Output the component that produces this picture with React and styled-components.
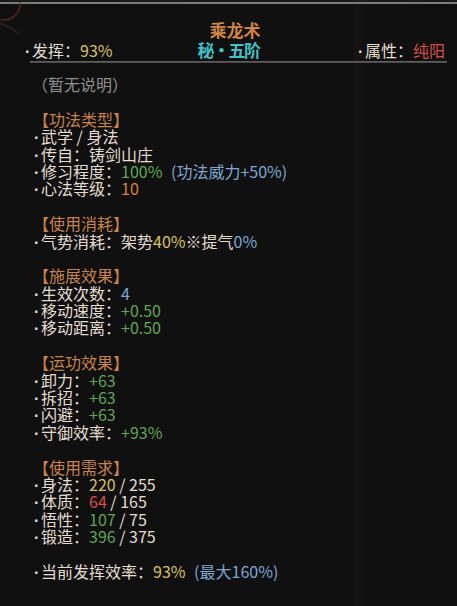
import React from "react";
import styled, { createGlobalStyle } from "styled-components";

const GlobalStyle = createGlobalStyle`
  html, body {
    margin: 0;
    padding: 0;
    background: #0e0e0e;
  }
`;

const LINE = 17.4;

const colors = {
  text: "#e4ddcf",
  gray: "#8e8e8e",
  head: "#c7834c",
  yellow: "#d7c069",
  green: "#5ea653",
  blue: "#7fa6d2",
  orange: "#de7f3c",
  red: "#d6504b",
};

const Page = styled.div`
  position: relative;
  width: 457px;
  height: 606px;
  overflow: hidden;
  background: linear-gradient(90deg, #0f0f0f 0%, #101010 77%, #141414 78%, #101010 80%, #0f0f0f 100%);
  font-family: "Noto Sans CJK SC", "Noto Sans", sans-serif;
  font-size: 16px;
  color: ${colors.text};
  border-top: 2px solid #1a1a1a;
  box-sizing: border-box;
`;

const TopRule = styled.div`
  height: 2px;
  background: #7b7b7b;
`;

const Deco = styled.svg`
  position: absolute;
  left: -14px;
  top: -12px;
  pointer-events: none;
`;

const Header = styled.div`
  padding: 16px 12px 0 25px;
`;

const Title = styled.div`
  text-align: center;
  font-size: 17px;
  font-weight: 700;
  line-height: 20px;
  color: #d08545;
`;

const SubRow = styled.div`
  display: flex;
  justify-content: space-between;
  align-items: center;
  height: 20px;
  line-height: 20px;
  position: relative;
`;

const Grade = styled.div`
  position: absolute;
  left: 0;
  right: 0;
  text-align: center;
  font-size: 17px;
  font-weight: 700;
  color: #47bfc3;
  margin-left: -25px;
  margin-right: -12px;
  letter-spacing: -1.5px;
`;

const Stat = styled.div`
  position: relative;
  z-index: 1;
  white-space: nowrap;
  height: 20px;
`;

const Separator = styled.div`
  height: 1px;
  margin: 1px 10px 0 30px;
  background: #4a4a4a;
  border-top: 1px solid #5e5e5e;
`;

const Body = styled.div`
  display: flex;
  flex-direction: column;
  gap: ${LINE}px;
  padding: 13px 0 0 34px;
  line-height: ${LINE}px;
`;

const Desc = styled.div`
  color: ${colors.gray};
  margin-left: -2px;
  height: ${LINE}px;
`;

const Section = styled.div`
  display: flex;
  flex-direction: column;
`;

const SectionTitle = styled.div`
  color: ${colors.head};
  margin-left: -1px;
  height: ${LINE}px;
`;

const Row = styled.div`
  white-space: nowrap;
  height: ${LINE}px;
`;

const Dot = styled.span`
  display: inline-block;
  width: 7px;
  font-family: "Liberation Sans", Arial, sans-serif;
  font-weight: 700;
  line-height: 0;
`;

const V = styled.span`
  color: ${(p) => colors[p.$c] || colors.text};
  margin-left: ${(p) => (p.$gap ? "5px" : "0")};
`;

const Item = ({ children }) => (
  <Row>
    <Dot>·</Dot>
    {children}
  </Row>
);

export default function App() {
  return (
    <>
      <GlobalStyle />
      <Page>
        <Deco width="60" height="60" viewBox="0 0 60 60">
          <circle cx="18" cy="14" r="16" fill="none" stroke="#6a2a30" strokeWidth="2" opacity="0.6" />
          <path d="M4 30 Q20 34 34 44" fill="none" stroke="#3a2a2a" strokeWidth="2" opacity="0.6" />
        </Deco>
        <TopRule />
        <Header>
          <Title>乘龙术</Title>
          <SubRow>
            <Grade>秘·五阶</Grade>
            <Stat>
              <Dot>·</Dot>发挥：<V $c="yellow">93%</V>
            </Stat>
            <Stat>
              <Dot>·</Dot>属性：<V $c="red">纯阳</V>
            </Stat>
          </SubRow>
        </Header>
        <Separator />
        <Body>
          <Desc>（暂无说明）</Desc>

          <Section>
            <SectionTitle>【功法类型】</SectionTitle>
            <Item>武学 / 身法</Item>
            <Item>传自：铸剑山庄</Item>
            <Item>
              修习程度：<V $c="green">100%</V> <V $c="blue" $gap>(功法威力+50%)</V>
            </Item>
            <Item>
              心法等级：<V $c="orange">10</V>
            </Item>
          </Section>

          <Section>
            <SectionTitle>【使用消耗】</SectionTitle>
            <Item>
              气势消耗：架势<V $c="yellow">40%</V>※提气<V $c="blue">0%</V>
            </Item>
          </Section>

          <Section>
            <SectionTitle>【施展效果】</SectionTitle>
            <Item>
              生效次数：<V $c="blue">4</V>
            </Item>
            <Item>
              移动速度：<V $c="green">+0.50</V>
            </Item>
            <Item>
              移动距离：<V $c="green">+0.50</V>
            </Item>
          </Section>

          <Section>
            <SectionTitle>【运功效果】</SectionTitle>
            <Item>
              卸力：<V $c="green">+63</V>
            </Item>
            <Item>
              拆招：<V $c="green">+63</V>
            </Item>
            <Item>
              闪避：<V $c="green">+63</V>
            </Item>
            <Item>
              守御效率：<V $c="green">+93%</V>
            </Item>
          </Section>

          <Section>
            <SectionTitle>【使用需求】</SectionTitle>
            <Item>
              身法：<V $c="yellow">220</V> / 255
            </Item>
            <Item>
              体质：<V $c="red">64</V> / 165
            </Item>
            <Item>
              悟性：<V $c="green">107</V> / 75
            </Item>
            <Item>
              锻造：<V $c="green">396</V> / 375
            </Item>
          </Section>

          <Section>
            <Item>
              当前发挥效率：<V $c="yellow">93%</V> <V $c="blue" $gap>(最大160%)</V>
            </Item>
          </Section>
        </Body>
      </Page>
    </>
  );
}
